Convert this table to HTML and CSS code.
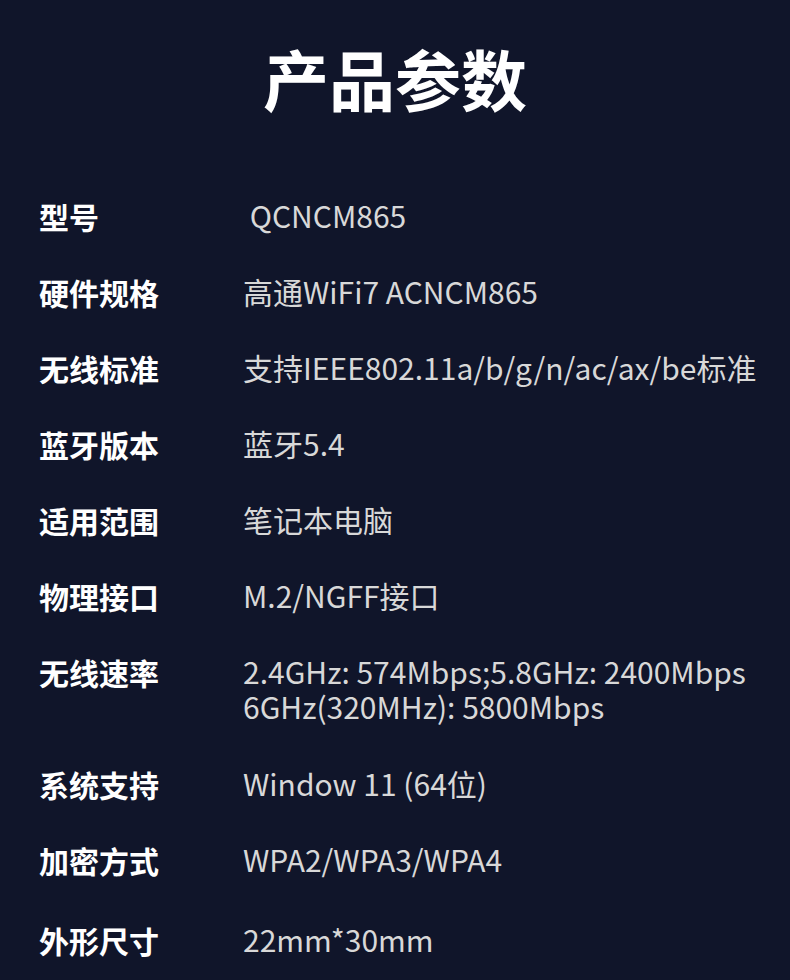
FILE: index.html
```html
<!doctype html>
<html lang="zh-CN">

<head>
    <meta charset="utf-8">
    <title>产品参数</title>
    <link rel="stylesheet" href="styles.css">
</head>

<body>
    <h1 class="title">产品参数</h1>
    <div class="params">
        <div class="row">
            <div class="label">型号</div>
            <div class="value">&nbsp;QCNCM865</div>
        </div>
        <div class="row">
            <div class="label">硬件规格</div>
            <div class="value">高通WiFi7 ACNCM865</div>
        </div>
        <div class="row">
            <div class="label">无线标准</div>
            <div class="value">支持IEEE802.11a/b/g/n/ac/ax/be标准</div>
        </div>
        <div class="row">
            <div class="label">蓝牙版本</div>
            <div class="value">蓝牙5.4</div>
        </div>
        <div class="row">
            <div class="label">适用范围</div>
            <div class="value">笔记本电脑</div>
        </div>
        <div class="row">
            <div class="label">物理接口</div>
            <div class="value">M.2/NGFF接口</div>
        </div>
        <div class="row row-tall">
            <div class="label">无线速率</div>
            <div class="value">2.4GHz: 574Mbps;5.8GHz: 2400Mbps<br>6GHz(320MHz): 5800Mbps</div>
        </div>
        <div class="row">
            <div class="label">系统支持</div>
            <div class="value">Window 11 (64位)</div>
        </div>
        <div class="row">
            <div class="label">加密方式</div>
            <div class="value">WPA2/WPA3/WPA4</div>
        </div>
        <div class="row row-last">
            <div class="label">外形尺寸</div>
            <div class="value">22mm*30mm</div>
        </div>
    </div>
</body>

</html>
```

FILE: styles.css
```css
body {
    margin: 0;
    padding: 0;
    background: #10152a;
    color: #d8d8d8;
    font-family: "Noto Sans CJK SC", "Noto Sans", sans-serif;
}

.title {
    margin: 0;
    padding-top: 38px;
    text-align: center;
    font-size: 66px;
    line-height: 78px;
    font-weight: 700;
    color: #ffffff;
}

.params {
    padding-top: 82px;
    padding-left: 39px;
    display: flex;
    flex-direction: column;
    gap: 40px;
}

.row {
    display: flex;
    align-items: flex-start;
}

.row-tall {
    margin-bottom: 2px;
}

.row-last {
    margin-top: 4px;
}

.label {
    width: 204px;
    flex-shrink: 0;
    font-size: 30px;
    line-height: 36px;
    font-weight: 700;
    color: #ffffff;
}

.value {
    font-size: 30px;
    line-height: 35px;
    color: #d8d8d8;
    white-space: nowrap;
}
```
